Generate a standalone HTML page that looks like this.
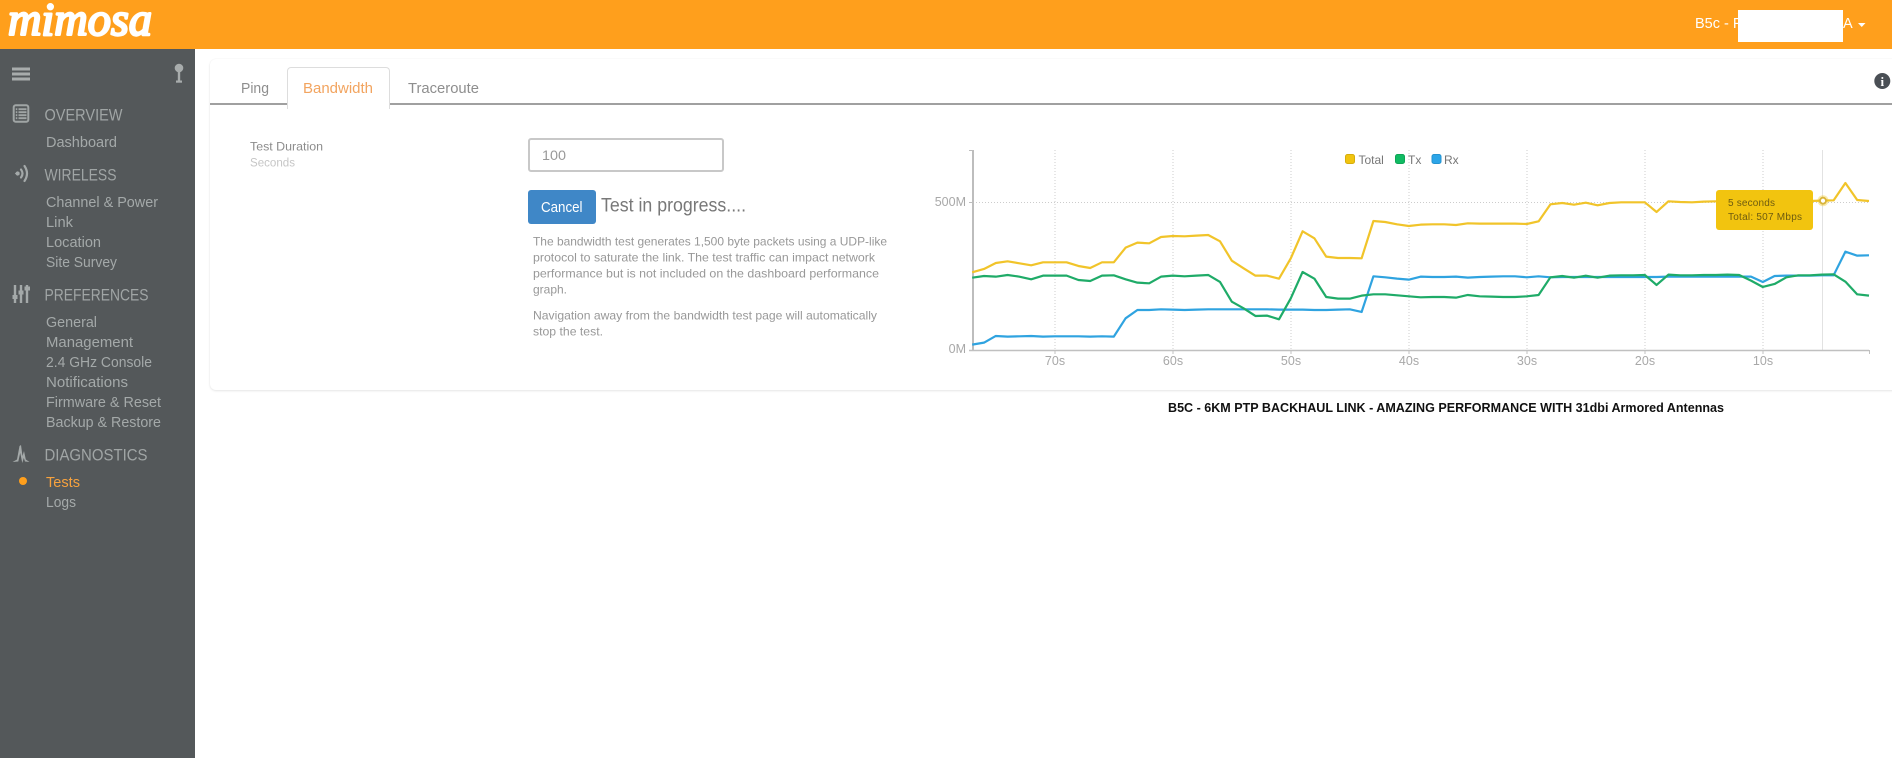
<!DOCTYPE html>
<html lang="en">
<head>
<meta charset="utf-8">
<title>Mimosa B5c - Tests</title>
<style>
html,body{margin:0;padding:0;width:1892px;height:758px;overflow:hidden;background:#fff}
#hdr{position:absolute;left:0;top:0;width:1892px;height:49px;background:#ff9f1c}
#side{position:absolute;left:0;top:49px;width:195px;height:709px;background:#54585a}
#card{position:absolute;left:210px;top:59px;width:1690px;height:331px;background:#fff;border-radius:6px;box-shadow:0 0 1px #e8e8e8,0 1px 2px #e6e6e6}
#tabline{position:absolute;left:210px;top:103px;width:1682px;height:2px;background:#a0a0a0}
#tab{position:absolute;left:287px;top:67px;width:101px;height:41px;background:#fff;border:1px solid #ddd;border-bottom:0;border-radius:4px 4px 0 0}
#input{position:absolute;left:528px;top:138px;width:192px;height:30px;border:2px solid #c8c8c8;border-radius:3px;background:#fff}
#btn{position:absolute;left:528px;top:190px;width:68px;height:34px;background:#3f87c7;border-radius:3px}
#mask{position:absolute;left:1738px;top:10px;width:105px;height:32px;background:#fff}
#tip{position:absolute;left:1716px;top:190px;width:97px;height:40px;background:#f2c40f;border-radius:3px}
svg{position:absolute;left:0;top:0}
text{font-family:"Liberation Sans",sans-serif}
.h{font-size:17px;fill:#a0a5a5}
.i{font-size:14.5px;fill:#a4a9a9}
.p{font-size:11.9px;fill:#989898}
.ax{font-size:12.5px;fill:#a8a8a8}
.lg{font-size:12px;fill:#777}
.grid{stroke:#ccc;stroke-width:1;stroke-dasharray:1 2;fill:none}
.ln{fill:none;stroke-width:2.2;vector-effect:non-scaling-stroke;stroke-linejoin:round}
</style>
</head>
<body>
<div id="hdr"></div>
<div id="side"></div>
<div id="card"></div>
<div id="tabline"></div>
<div id="tab"></div>
<div id="input"></div>
<div id="btn"></div>

<svg width="1892" height="758" viewBox="0 0 1892 758">
  <!-- logo -->
  <text x="8" y="35" textLength="144" lengthAdjust="spacingAndGlyphs" style="font-family:'Liberation Serif',serif;font-style:italic;font-size:47px;fill:#fff;stroke:#fff;stroke-width:2.4px;stroke-linejoin:round">mimosa</text>

  <!-- header right -->
  <text x="1695" y="28" style="font-size:14.5px;fill:#fff">B5c - P</text>
  <text x="1843" y="28" style="font-size:14.5px;fill:#fff">A</text>
  <path d="M1858 23h7.5l-3.75 4z" fill="#fff"/>

  <!-- hamburger + pin -->
  <g fill="#a8acac">
    <rect x="12" y="67.500" width="18" height="3"/><rect x="12" y="72.500" width="18" height="3"/><rect x="12" y="77.500" width="18" height="3"/>
    <circle cx="179" cy="68" r="4.300"/><rect x="177.800" y="72" width="2.400" height="9"/><rect x="176" y="80.500" width="6" height="2.200"/>
  </g>

  <!-- overview icon -->
  <g fill="none" stroke="#a0a5a5">
    <rect x="13.700" y="105.300" width="14.600" height="16.400" rx="2" stroke-width="2"/>
    <path d="M18.500 109.200h8M18.500 112.200h8M18.500 115.200h8M18.500 118.200h8" stroke-width="1.800"/>
    <path d="M15.800 109.200h1.500M15.800 112.200h1.500M15.800 115.200h1.500M15.800 118.200h1.500" stroke-width="1.800"/>
  </g>
  <!-- wireless icon -->
  <g fill="none" stroke="#a4a9a9" stroke-width="2.200" stroke-linecap="round">
    <path d="M21 169.500Q24 173.500 21 177.500"/>
    <path d="M24.500 166Q29.500 173.500 24.500 181"/>
  </g>
  <path d="M14.800 173.500l3-2.400v4.800z" fill="#a4a9a9"/>
  <circle cx="17.700" cy="173.500" r="2" fill="#a4a9a9"/>
  <!-- sliders icon -->
  <g fill="#a4a9a9">
    <rect x="13.800" y="285" width="2.400" height="18"/><rect x="19.800" y="285" width="2.400" height="18"/><rect x="25.800" y="285" width="2.400" height="18"/>
    <rect x="12.500" y="295" width="5" height="4"/><rect x="18.500" y="290.500" width="5" height="4"/><rect x="24.500" y="286.500" width="5.500" height="4"/>
  </g>
  <!-- diagnostics icon -->
  <path d="M12.500 462L17 459.500 19.500 446 21 445 22.500 456 24 451 25.800 459.500 29.500 462 25 461.500 23.800 458 22.300 463 20.200 453 18.300 461.500z" fill="#a4a9a9"/>

  <!-- sidebar text -->
  <text class="h" x="44.500" y="120.500" textLength="78" lengthAdjust="spacingAndGlyphs">OVERVIEW</text>
  <text class="i" x="46" y="147" textLength="71" lengthAdjust="spacingAndGlyphs">Dashboard</text>
  <text class="h" x="44.500" y="180.500" textLength="72" lengthAdjust="spacingAndGlyphs">WIRELESS</text>
  <text class="i" x="46" y="207" textLength="112" lengthAdjust="spacingAndGlyphs">Channel &amp; Power</text>
  <text class="i" x="46" y="227" textLength="27" lengthAdjust="spacingAndGlyphs">Link</text>
  <text class="i" x="46" y="247" textLength="55" lengthAdjust="spacingAndGlyphs">Location</text>
  <text class="i" x="46" y="267" textLength="71" lengthAdjust="spacingAndGlyphs">Site Survey</text>
  <text class="h" x="44.500" y="300.500" textLength="104" lengthAdjust="spacingAndGlyphs">PREFERENCES</text>
  <text class="i" x="46" y="327" textLength="51" lengthAdjust="spacingAndGlyphs">General</text>
  <text class="i" x="46" y="347" textLength="87" lengthAdjust="spacingAndGlyphs">Management</text>
  <text class="i" x="46" y="367" textLength="106" lengthAdjust="spacingAndGlyphs">2.4 GHz Console</text>
  <text class="i" x="46" y="387" textLength="82" lengthAdjust="spacingAndGlyphs">Notifications</text>
  <text class="i" x="46" y="407" textLength="115" lengthAdjust="spacingAndGlyphs">Firmware &amp; Reset</text>
  <text class="i" x="46" y="427" textLength="115" lengthAdjust="spacingAndGlyphs">Backup &amp; Restore</text>
  <text class="h" x="44.500" y="460.500" textLength="103" lengthAdjust="spacingAndGlyphs">DIAGNOSTICS</text>
  <circle cx="23" cy="481" r="4" fill="#ff9f1c"/>
  <text class="i" x="46" y="487" textLength="34" lengthAdjust="spacingAndGlyphs" style="fill:#f7a23e">Tests</text>
  <text class="i" x="46" y="507" textLength="30" lengthAdjust="spacingAndGlyphs">Logs</text>

  <!-- tabs -->
  <text x="241" y="93" textLength="28" lengthAdjust="spacingAndGlyphs" style="font-size:14.500px;fill:#8e8e8e">Ping</text>
  <text x="303" y="93" textLength="70" lengthAdjust="spacingAndGlyphs" style="font-size:15px;fill:#f2a45f">Bandwidth</text>
  <text x="408" y="93" textLength="71" lengthAdjust="spacingAndGlyphs" style="font-size:14.500px;fill:#8e8e8e">Traceroute</text>

  <!-- info -->
  <circle cx="1882.300" cy="81" r="8" fill="#4a4f55"/>
  <text x="1882.300" y="86" text-anchor="middle" style="font-family:'Liberation Serif',serif;font-weight:bold;font-size:13px;fill:#fff">i</text>

  <!-- form -->
  <text x="250" y="150.500" textLength="73" lengthAdjust="spacingAndGlyphs" style="font-size:12.400px;fill:#8c8c8c">Test Duration</text>
  <text x="250" y="166.500" textLength="45" lengthAdjust="spacingAndGlyphs" style="font-size:12.400px;fill:#c6c6c6">Seconds</text>
  <text x="542" y="160" textLength="24" lengthAdjust="spacingAndGlyphs" style="font-size:14px;fill:#999">100</text>
  <text x="541" y="212" textLength="41.500" lengthAdjust="spacingAndGlyphs" style="font-size:14.500px;fill:#fff">Cancel</text>
  <text x="601" y="211.500" textLength="145" lengthAdjust="spacingAndGlyphs" style="font-size:19px;fill:#787878">Test in progress....</text>

  <text class="p" x="533" y="245.500" textLength="354" lengthAdjust="spacingAndGlyphs">The bandwidth test generates 1,500 byte packets using a UDP-like</text>
  <text class="p" x="533" y="261.500" textLength="342" lengthAdjust="spacingAndGlyphs">protocol to saturate the link. The test traffic can impact network</text>
  <text class="p" x="533" y="277.500" textLength="346" lengthAdjust="spacingAndGlyphs">performance but is not included on the dashboard performance</text>
  <text class="p" x="533" y="293.500" textLength="34" lengthAdjust="spacingAndGlyphs">graph.</text>
  <text class="p" x="533" y="319.500" textLength="344" lengthAdjust="spacingAndGlyphs">Navigation away from the bandwidth test page will automatically</text>
  <text class="p" x="533" y="335.500" textLength="70" lengthAdjust="spacingAndGlyphs">stop the test.</text>

  <!-- chart grid -->
  <g class="grid">
    <path d="M1055 150V350M1173 150V350M1291 150V350M1409 150V350M1527 150V350M1645 150V350M1763 150V350"/>
    <path d="M973 202.500H1869"/>
  </g>
  <path d="M1822.500 150V350" stroke="#e2e2e2" fill="none"/>
  <path d="M973 150V351" stroke="#bdbdbd" stroke-width="2" fill="none"/>
  <path d="M969 150.500H973M969 202.500H973" stroke="#bdbdbd" fill="none"/>
  <path d="M969 350.500H1869" stroke="#c0c0c0" stroke-width="1.500" fill="none"/>
  <path d="M1055 350V354M1173 350V354M1291 350V354M1409 350V354M1527 350V354M1645 350V354M1763 350V354M1869.500 350V354" stroke="#c0c0c0" fill="none"/>

  <text class="ax" x="966" y="206" text-anchor="end">500M</text>
  <text class="ax" x="966" y="353" text-anchor="end">0M</text>
  <g class="ax" text-anchor="middle">
    <text x="1055" y="365">70s</text><text x="1173" y="365">60s</text><text x="1291" y="365">50s</text><text x="1409" y="365">40s</text><text x="1527" y="365">30s</text><text x="1645" y="365">20s</text><text x="1763" y="365">10s</text>
  </g>

  <!-- legend -->
  <rect x="1345.500" y="154.500" width="9" height="9" rx="2" fill="#f1c40f" stroke="#d6ad0c"/>
  <text class="lg" x="1358.500" y="164">Total</text>
  <rect x="1395.500" y="154.500" width="9" height="9" rx="2" fill="#10bb63" stroke="#0ea556"/>
  <text class="lg" x="1408" y="164">Tx</text>
  <rect x="1432" y="154.500" width="9" height="9" rx="2" fill="#2ca5e8" stroke="#2593d0"/>
  <text class="lg" x="1444" y="164">Rx</text>

  <!-- series: x = seconds ago, y = sampled value -->
  <g transform="translate(1880.800 130) scale(-11.800 0.3333)">
    <polyline class="ln" stroke="#f1c42a" points="77,427 76,417 75,399 74,394 73,400 72,406 71,397 70,397 69,397 68,408 67,414 66,397 65,397 64,353 63,338 62,340 61,321 60,318 59,319 58,317 57,315 56,334 55,392 54,415 53,437 52,437 51,446 50,385 49,304 48,325 47,380 46,384 45,384 44,385 43,273 42,276 41,283 40,288 39,284 38,283 37,283 36,285 35,280 34,281 33,281 32,281 31,281 30,282 29,274 28,223 27,219 26,224 25,218 24,226 23,219 22,217 21,217 20,217 19,246 18,214 17,216 16,217 15,215 14,214 13,214 12,214 11,214 10,214 9,214 8,214 7,214 6,213 5,212 4,211 3,159 2,210 1,213"/>
    <polyline class="ln" stroke="#2fa3e0" points="77,644 76,638 75,618 74,620 73,619 72,618 71,620 70,619 69,619 68,619 67,620 66,619 65,620 64,565 63,540 62,540 61,538 60,539 59,540 58,539 57,538 56,538 55,538 54,538 53,538 52,538 51,539 50,539 49,539 48,540 47,540 46,539 45,538 44,546 43,439 42,442 41,446 40,449 39,440 38,441 37,441 36,440 35,443 34,441 33,440 32,439 31,439 30,442 29,439 28,442 27,441 26,441 25,441 24,441 23,441 22,441 21,441 20,441 19,441 18,440 17,440 16,440 15,440 14,440 13,440 12,440 11,440 10,456 9,438 8,437 7,437 6,437 5,436 4,436 3,365 2,377 1,376"/>
    <polyline class="ln" stroke="#1fab68" points="77,443 76,438 75,440 74,435 73,440 72,448 71,437 70,437 69,437 68,450 67,453 66,437 65,436 64,448 63,458 62,460 61,440 60,437 59,439 58,437 57,435 56,456 55,515 54,535 53,558 52,557 51,568 50,505 49,426 48,446 47,501 46,506 45,506 44,497 43,493 42,493 41,496 40,499 39,502 38,501 37,501 36,503 35,495 34,499 33,500 32,501 31,501 30,499 29,495 28,442 27,438 26,443 25,437 24,443 23,437 22,436 21,436 20,435 19,465 18,434 17,436 16,436 15,435 14,435 13,434 12,435 11,452 10,471 9,462 8,442 7,436 6,436 5,434 4,433 3,455 2,493 1,497"/>
  </g>
</svg>

<div id="tip"></div>
<div id="mask"></div>

<svg width="1892" height="758" viewBox="0 0 1892 758">
  <circle cx="1823" cy="200.700" r="5.500" fill="#f1c40f" opacity=".35"/>
  <circle cx="1823" cy="200.700" r="3" fill="#fff" stroke="#d9b43a" stroke-width="1.800"/>
  <text x="1728" y="206" textLength="47" style="font-size:10px;fill:#6e5c10">5 seconds</text>
  <text x="1728" y="220" textLength="74" style="font-size:10px;fill:#6e5c10">Total: 507 Mbps</text>
  <text x="1168" y="412" textLength="556" lengthAdjust="spacingAndGlyphs" style="font-size:13px;font-weight:bold;fill:#111">B5C  - 6KM PTP BACKHAUL LINK - AMAZING PERFORMANCE WITH 31dbi Armored Antennas</text>
</svg>
</body>
</html>
